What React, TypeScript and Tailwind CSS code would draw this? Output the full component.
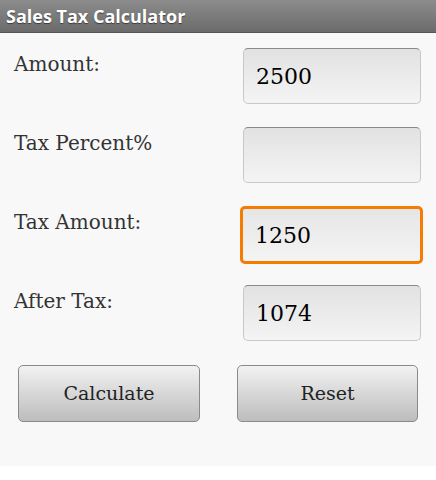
export default function App() {
  const rows = [
    { label: "Amount:", value: "2500" },
    { label: "Tax Percent%", value: "" },
    { label: "Tax Amount:", value: "1250", focused: true },
    { label: "After Tax:", value: "1074" },
  ];

  return (
    <div className="w-[436px] h-[480px] bg-white font-['DejaVu_Serif',serif]">
      <div className="h-[33px] bg-gradient-to-b from-[#8c8c8c] to-[#6b6b6b] border-b border-[#555] px-[6px] flex items-center">
        <h1 className="text-white font-bold text-[18px] font-['Open_Sans',sans-serif] [text-shadow:0_1px_1px_rgba(0,0,0,0.5)]">
          Sales Tax Calculator
        </h1>
      </div>
      <div className="h-[433px] bg-[#f8f8f8] pt-[15px]">
        {rows.map((r) => (
          <div key={r.label} className="flex justify-between h-[79px] pl-[14px] pr-[15px]">
            <div className="text-[20px] leading-[24px] text-[#333] pt-[4px]">{r.label}</div>
            {r.focused ? (
              <div className="w-[183px] h-[58px] -mr-[2px] rounded-[5px] border-[3px] border-[#f57c00] bg-gradient-to-b from-[#e6e6e6] to-[#f4f4f4] flex items-center px-[12px] text-[22px] text-black">
                {r.value}
              </div>
            ) : (
              <div className="w-[178px] h-[56px] rounded-[5px] border border-[#c8c8c8] border-t-[#8a8a8a] bg-gradient-to-b from-[#e2e2e2] to-[#f4f4f4] flex items-center px-[12px] text-[22px] text-black">
                {r.value}
              </div>
            )}
          </div>
        ))}
        <div className="flex justify-between pl-[18px] pr-[18px] mt-[1px]">
          <button className="w-[182px] h-[57px] rounded-[5px] border border-[#8a8a8a] bg-gradient-to-b from-[#f2f2f2] to-[#bdbdbd] text-[19px] text-[#222]">
            Calculate
          </button>
          <button className="w-[181px] h-[57px] rounded-[5px] border border-[#8a8a8a] bg-gradient-to-b from-[#f2f2f2] to-[#bdbdbd] text-[19px] text-[#222]">
            Reset
          </button>
        </div>
      </div>
    </div>
  );
}
